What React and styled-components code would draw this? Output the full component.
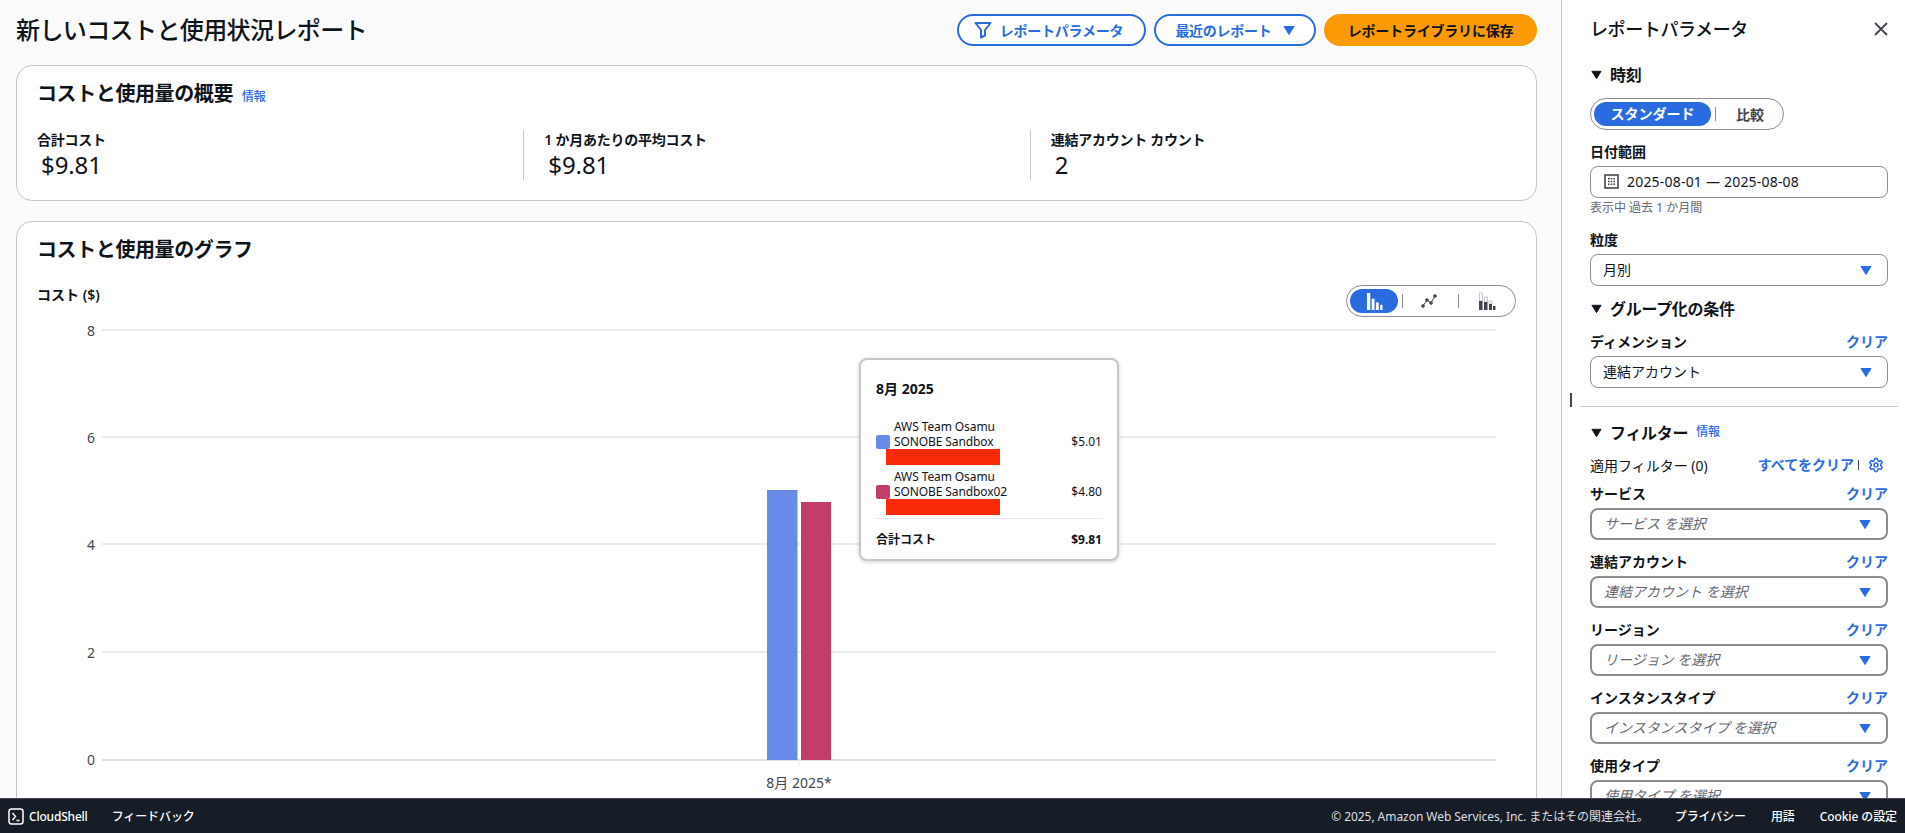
import React from "react";
import styled, { createGlobalStyle } from "styled-components";
import { Settings } from "lucide-react";

const blue = "#2a6ce0";
const ink = "#0f141a";

const GlobalStyle = createGlobalStyle`
    html, body {
        margin: 0;
        height: 100%;
        overflow: hidden;
    }
    body {
        background: #fbfbfb;
        color: ${ink};
        font-family: "Noto Sans", "Noto Sans CJK JP", sans-serif;
        font-size: 14px;
    }
    * {
        box-sizing: border-box;
    }
`;

const filters = [
    { label: "サービス", placeholder: "サービス を選択" },
    { label: "連結アカウント", placeholder: "連結アカウント を選択" },
    { label: "リージョン", placeholder: "リージョン を選択" },
    { label: "インスタンスタイプ", placeholder: "インスタンスタイプ を選択" },
    { label: "使用タイプ", placeholder: "使用タイプ を選択" },
];

const gridLines = [
    { value: 8, y: 330 },
    { value: 6, y: 437 },
    { value: 4, y: 544 },
    { value: 2, y: 652 },
];

const Caret = ({ size = 12, color = blue }) => (
    <svg width={size} height={size} viewBox="0 0 12 12">
        <path d="M1 2.5h10L6 10.5z" fill={color} stroke={color} strokeLinejoin="round" />
    </svg>
);

const FilterIcon = () => (
    <svg width="18" height="18" viewBox="0 0 18 18" fill="none" stroke={blue} strokeWidth="2" strokeLinejoin="round">
        <path d="M1.500 2h15l-5.500 7v5.500L7 16.500V9z" />
    </svg>
);

const CloseIcon = () => (
    <svg width="14" height="14" viewBox="0 0 14 14" fill="none" stroke="#424650" strokeWidth="1.8">
        <path d="M1 1l12 12M13 1L1 13" />
    </svg>
);

const CalendarIcon = () => (
    <svg width="15" height="15" viewBox="0 0 15 15" fill="none">
        <rect x="1" y="1" width="13" height="13" stroke="#424650" strokeWidth="1.6" />
        <path d="M4 4h1.6v1.6H4zM6.7 4h1.6v1.6H6.7zM9.4 4H11v1.6H9.4zM4 6.7h1.6v1.6H4zM6.7 6.7h1.6v1.6H6.7zM9.4 6.7H11v1.6H9.4zM4 9.4h1.6V11H4zM6.7 9.4h1.6V11H6.7zM9.4 9.4H11V11H9.4z" fill="#424650" />
    </svg>
);

const BarsIcon = () => (
    <svg width="17" height="17" viewBox="0 0 18 18" fill="#fff">
        <path d="M1 0h3.500v18H1zM6 6h3v12H6zM10.500 10h3v8h-3zM15 12.500h2.500V18H15z" />
    </svg>
);

const LineIcon = () => (
    <svg width="16" height="16" viewBox="0 0 16 16" fill="#424650" stroke="#424650">
        <path d="M2 13L6 7l4 3 4-7" fill="none" strokeWidth="1" />
        <circle cx="2" cy="13" r="1.300" />
        <circle cx="6" cy="7" r="1.300" />
        <circle cx="10" cy="10" r="1.300" />
        <circle cx="14" cy="3" r="1.300" />
    </svg>
);

const StackedIcon = () => (
    <svg width="18" height="18" viewBox="0 0 18 18">
        <path d="M1.500 1h3v8h-3zM6.500 5h3v5h-3zM11 9h3v3h-3z" fill="#fff" stroke="#c6c6cd" strokeWidth="1" />
        <path d="M1 9h3.500v9H1zM6 10h3.500v8H6zM11 12h3v6h-3zM15 14h2.500v4H15z" fill="#424650" />
    </svg>
);

const ShellIcon = () => (
    <svg width="16" height="17" viewBox="0 0 16 17" fill="none" stroke="#fff">
        <rect x="1" y="1" width="14" height="15" rx="2.500" strokeWidth="1.500" />
        <path d="M4.500 5l3 3.500-3 3.500M8.500 12.500h3" strokeWidth="1.400" />
    </svg>
);

const SelectBox = ({ value, strong, placeholder }) => (
    <Box $strong={strong}>
        {placeholder ? <Placeholder>{placeholder}</Placeholder> : <BoxText>{value}</BoxText>}
        <Caret />
    </Box>
);

function App() {
    return (
        <Page>
            <GlobalStyle />
            <Body>
                <Main>
                    <Header>
                        <Title>新しいコストと使用状況レポート</Title>
                        <Actions>
                            <OutlineButton $width={189} $gap={8} $padRight={6}>
                                <FilterIcon />
                                レポートパラメータ
                            </OutlineButton>
                            <OutlineButton $width={162} $gap={11}>
                                最近のレポート
                                <Caret />
                            </OutlineButton>
                            <PrimaryButton>レポートライブラリに保存</PrimaryButton>
                        </Actions>
                    </Header>

                    <Card>
                        <CardTitle>
                            コストと使用量の概要 <InfoLink>情報</InfoLink>
                        </CardTitle>
                        <Stats>
                            <Stat>
                                <StatLabel>合計コスト</StatLabel>
                                <StatValue>$9.81</StatValue>
                            </Stat>
                            <Stat $divided>
                                <StatLabel>1 か月あたりの平均コスト</StatLabel>
                                <StatValue>$9.81</StatValue>
                            </Stat>
                            <Stat $divided>
                                <StatLabel>連結アカウント カウント</StatLabel>
                                <StatValue>2</StatValue>
                            </Stat>
                        </Stats>
                    </Card>

                    <ChartCard>
                        <CardTitle>コストと使用量のグラフ</CardTitle>
                        <ChartHead>
                            <ChartAxisTitle>コスト ($)</ChartAxisTitle>
                            <ChartToggle>
                                <ChartOption $active>
                                    <BarsIcon />
                                </ChartOption>
                                <ToggleRule />
                                <ChartOption>
                                    <LineIcon />
                                </ChartOption>
                                <ToggleRule />
                                <ChartOption $shift={2}>
                                    <StackedIcon />
                                </ChartOption>
                            </ChartToggle>
                        </ChartHead>
                        <ChartArea>
                            <svg width="1519" height="480" viewBox="17 317 1519 480">
                                {gridLines.map((line) => (
                                    <g key={line.value}>
                                        <line x1="102" x2="1496" y1={line.y} y2={line.y} stroke="#e6e6ea" strokeWidth="1.5" />
                                        <AxisText x="95" y={line.y + 6} textAnchor="end">
                                            {line.value}
                                        </AxisText>
                                    </g>
                                ))}
                                <line x1="102" x2="1496" y1="760" y2="760" stroke="#dedee3" strokeWidth="2" />
                                <line x1="799" x2="799" y1="760" y2="766" stroke="#e8e8ec" strokeWidth="1" />
                                <AxisText x="95" y="765" textAnchor="end">0</AxisText>
                                <rect x="767" y="490" width="30.500" height="270" fill="#688ae8" />
                                <rect x="801" y="502" width="30" height="258" fill="#c33d69" />
                                <AxisText x="799" y="788" textAnchor="middle">8月 2025*</AxisText>
                            </svg>
                            <Tooltip>
                                <TooltipTitle>8月 2025</TooltipTitle>
                                <TooltipRow>
                                    <Swatch $color="#688ae8" />
                                    <TooltipName>AWS Team Osamu<br />SONOBE Sandbox</TooltipName>
                                    <TooltipAmount>$5.01</TooltipAmount>
                                </TooltipRow>
                                <Redaction />
                                <TooltipRow>
                                    <Swatch $color="#c33d69" />
                                    <TooltipName>AWS Team Osamu<br />SONOBE Sandbox02</TooltipName>
                                    <TooltipAmount>$4.80</TooltipAmount>
                                </TooltipRow>
                                <Redaction />
                                <TooltipTotal>
                                    <span>合計コスト</span>
                                    <span>$9.81</span>
                                </TooltipTotal>
                            </Tooltip>
                        </ChartArea>
                    </ChartCard>
                </Main>

                <Panel>
                    <PanelHead>
                        <PanelTitle>レポートパラメータ</PanelTitle>
                        <CloseIcon />
                    </PanelHead>

                    <SectionHead $top={20}>
                        <Caret size={11} color={ink} />
                        時刻
                    </SectionHead>
                    <Segment>
                        <SegmentOn>スタンダード</SegmentOn>
                        <SegmentRule />
                        <SegmentOff>比較</SegmentOff>
                    </Segment>

                    <FieldLabel $top={12}>日付範囲</FieldLabel>
                    <DateBox>
                        <CalendarIcon />
                        <DateText>2025-08-01 — 2025-08-08</DateText>
                    </DateBox>
                    <Hint>表示中 過去 1 か月間</Hint>

                    <FieldLabel $top={14}>粒度</FieldLabel>
                    <SelectBox value="月別" />

                    <SectionHead $top={10}>
                        <Caret size={11} color={ink} />
                        グループ化の条件
                    </SectionHead>
                    <LabelRow $top={12}>
                        <FieldLabel>ディメンション</FieldLabel>
                        <ClearLink>クリア</ClearLink>
                    </LabelRow>
                    <SelectBox value="連結アカウント" />

                    <PanelRule>
                        <DragHandle />
                    </PanelRule>

                    <SectionHead $top={13}>
                        <Caret size={11} color={ink} />
                        フィルター
                        <InfoLink>情報</InfoLink>
                    </SectionHead>
                    <AppliedRow>
                        <span>適用フィルター (0)</span>
                        <AppliedTools>
                            <ClearLink>すべてをクリア</ClearLink>
                            <ThinBar />
                            <Settings size={16} color={blue} strokeWidth={2.4} />
                        </AppliedTools>
                    </AppliedRow>
                    {filters.map((filter) => (
                        <FilterField key={filter.label}>
                            <LabelRow>
                                <FieldLabel>{filter.label}</FieldLabel>
                                <ClearLink>クリア</ClearLink>
                            </LabelRow>
                            <SelectBox strong placeholder={filter.placeholder} />
                        </FilterField>
                    ))}
                </Panel>
            </Body>

            <Footer>
                <FooterGroup $gap={24}>
                    <ShellLink>
                        <ShellIcon />
                        CloudShell
                    </ShellLink>
                    <FooterItem>フィードバック</FooterItem>
                </FooterGroup>
                <FooterGroup $gap={25}>
                    <Copyright>© 2025, Amazon Web Services, Inc. またはその関連会社。</Copyright>
                    <FooterItem>プライバシー</FooterItem>
                    <FooterItem>用語</FooterItem>
                    <FooterItem>Cookie の設定</FooterItem>
                </FooterGroup>
            </Footer>
        </Page>
    );
}

const Page = styled.div`
    display: flex;
    flex-direction: column;
    height: 100vh;
    overflow: hidden;
`;

const Body = styled.div`
    display: flex;
    flex: 1;
    min-height: 0;
`;

const Main = styled.main`
    flex: 1;
    min-width: 0;
    padding: 14px 24px 0 16px;
    overflow: hidden;
`;

const Header = styled.header`
    display: flex;
    align-items: center;
    justify-content: space-between;
    height: 32px;
    margin-bottom: 19px;
`;

const Title = styled.h1`
    margin: 0;
    font-size: 24px;
    line-height: 32px;
    font-weight: 500;
    letter-spacing: -0.6px;
`;

const Actions = styled.div`
    display: flex;
    gap: 8px;
`;

const OutlineButton = styled.button`
    display: flex;
    align-items: center;
    justify-content: center;
    gap: ${(p) => p.$gap}px;
    width: ${(p) => p.$width}px;
    height: 32px;
    padding: 0 ${(p) => p.$padRight ?? 0}px 0 0;
    background: #fff;
    border: 2px solid ${blue};
    border-radius: 20px;
    color: ${blue};
    font: inherit;
    font-size: 14px;
    font-weight: 700;
    letter-spacing: -0.25px;
`;

const PrimaryButton = styled.button`
    width: 213px;
    height: 32px;
    padding: 0;
    background: #fa9a05;
    border: none;
    border-radius: 20px;
    color: ${ink};
    font: inherit;
    font-size: 14px;
    font-weight: 700;
    letter-spacing: -0.2px;
`;

const Card = styled.section`
    height: 136px;
    padding-top: 14px;
    background: #fff;
    border: 1px solid #c6c6cd;
    border-radius: 16px;
`;

const ChartCard = styled(Card)`
    height: 620px;
    margin-top: 20px;
`;

const CardTitle = styled.h2`
    display: flex;
    align-items: baseline;
    gap: 9px;
    margin: 0;
    padding-left: 20px;
    font-size: 20px;
    line-height: 28px;
    font-weight: 600;
    letter-spacing: -0.4px;
`;

const InfoLink = styled.a`
    color: ${blue};
    font-size: 12px;
    line-height: 16px;
    font-weight: 500;
    letter-spacing: -0.3px;
`;

const Stats = styled.div`
    display: grid;
    grid-template-columns: repeat(3, 1fr);
    margin-top: 22px;
`;

const Stat = styled.div`
    height: 50px;
    padding-left: 20px;
    border-left: ${(p) => (p.$divided ? "1px solid #c6c6cd" : "none")};
`;

const StatLabel = styled.div`
    font-size: 14px;
    line-height: 20px;
    font-weight: 600;
    letter-spacing: -0.25px;
`;

const StatValue = styled.div`
    padding-left: 4px;
    font-size: 24px;
    line-height: 30px;
    letter-spacing: -0.1px;
`;

const ChartHead = styled.div`
    display: flex;
    align-items: flex-start;
    justify-content: space-between;
    height: 32px;
    margin-top: 21px;
    padding: 0 20px;
`;

const ChartAxisTitle = styled(StatLabel)`
    letter-spacing: 0;
`;

const ChartToggle = styled.div`
    display: flex;
    align-items: center;
    width: 170px;
    height: 32px;
    padding: 0 3px;
    background: #fff;
    border: 1px solid #8c8c94;
    border-radius: 16px;
`;

const ChartOption = styled.span`
    display: flex;
    align-items: center;
    justify-content: center;
    flex: ${(p) => (p.$active ? "0 0 48px" : "1")};
    height: 24px;
    padding-left: ${(p) => p.$shift ?? 0}px;
    background: ${(p) => (p.$active ? blue : "transparent")};
    border-radius: 12px;
`;

const ToggleRule = styled.span`
    flex: none;
    width: 1px;
    height: 14px;
    margin-left: 4px;
    background: #8c8c94;
`;

const ChartArea = styled.div`
    position: relative;

    svg {
        display: block;
    }
`;

const AxisText = styled.text`
    font-size: 14px;
    fill: #424650;
`;

const Tooltip = styled.div`
    position: absolute;
    left: 842px;
    top: 41px;
    width: 260px;
    height: 203px;
    padding: 19px 15px 0;
    background: #fff;
    border: 2px solid #c6c6cd;
    border-radius: 8px;
    box-shadow: 0 1px 4px rgba(15, 20, 26, 0.2);
`;

const TooltipTitle = styled.div`
    margin-bottom: 20px;
    font-size: 14px;
    line-height: 20px;
    font-weight: 700;
`;

const TooltipRow = styled.div`
    display: flex;
    align-items: flex-end;
    height: 30px;
    font-size: 12px;
    line-height: 15px;
`;

const Swatch = styled.span`
    flex: none;
    width: 14px;
    height: 14px;
    background: ${(p) => p.$color};
    border-radius: 2px;
`;

const TooltipName = styled.span`
    margin-left: 4px;
    white-space: nowrap;
    letter-spacing: -0.1px;
`;

const TooltipAmount = styled.span`
    margin-left: auto;
`;

const Redaction = styled.div`
    width: 114px;
    height: 16px;
    margin: 0 0 4px 10px;
    background: #f92a07;
`;

const TooltipTotal = styled.div`
    display: flex;
    justify-content: space-between;
    margin-top: -1px;
    padding-top: 11px;
    border-top: 1px solid #e8e8ec;
    font-size: 12px;
    line-height: 20px;
    font-weight: 700;
`;

const Panel = styled.aside`
    flex: none;
    width: 344px;
    padding: 16px 17px 0 28px;
    background: #fff;
    border-left: 1px solid #c6c6cd;
    overflow: hidden;
`;

const PanelHead = styled.div`
    display: flex;
    align-items: center;
    justify-content: space-between;
    height: 26px;
`;

const PanelTitle = styled.h2`
    margin: 0;
    font-size: 18px;
    line-height: 26px;
    font-weight: 500;
    letter-spacing: -0.4px;
`;

const SectionHead = styled.h3`
    display: flex;
    align-items: center;
    gap: 8px;
    height: 24px;
    margin: ${(p) => p.$top ?? 21}px 0 0;
    padding-left: 1px;
    font-size: 16px;
    font-weight: 700;
    letter-spacing: -0.3px;
`;

const Segment = styled.div`
    display: flex;
    align-items: center;
    width: 194px;
    height: 32px;
    margin-top: 12px;
    padding: 0 3px;
    border: 1px solid #8c8c94;
    border-radius: 16px;
`;

const SegmentOn = styled.span`
    width: 117px;
    height: 24px;
    background: ${blue};
    border-radius: 12px;
    color: #fff;
    font-size: 14px;
    font-weight: 700;
    line-height: 24px;
    text-align: center;
`;

const SegmentRule = styled.span`
    width: 1px;
    height: 14px;
    margin-left: 4px;
    background: #8c8c94;
`;

const SegmentOff = styled.span`
    flex: 1;
    padding-left: 4px;
    color: #424650;
    font-weight: 700;
    text-align: center;
`;

const FieldLabel = styled.div`
    margin-top: ${(p) => p.$top ?? 0}px;
    font-size: 14px;
    line-height: 20px;
    font-weight: 600;
`;

const LabelRow = styled.div`
    display: flex;
    justify-content: space-between;
    margin-top: ${(p) => p.$top ?? 0}px;
`;

const ClearLink = styled.a`
    color: ${blue};
    font-size: 14px;
    line-height: 20px;
    font-weight: 600;
`;

const Box = styled.div`
    display: flex;
    align-items: center;
    justify-content: space-between;
    height: 32px;
    margin-top: 4px;
    padding: 0 15px 2px 12px;
    background: #fff;
    border: ${(p) => (p.$strong ? 2 : 1)}px solid #8c8c94;
    border-radius: 8px;

    svg {
        margin-top: 2px;
    }
`;

const DateBox = styled(Box)`
    justify-content: flex-start;
    gap: 8px;
    padding-left: 13px;

    svg {
        margin-top: 0;
    }
`;

const BoxText = styled.span`
    font-size: 14px;
`;

const DateText = styled(BoxText)`
    letter-spacing: 0.2px;
`;

const Placeholder = styled.span`
    color: #656871;
    font-size: 14px;
    font-style: italic;
`;

const Hint = styled.div`
    margin-top: 2px;
    color: #656871;
    font-size: 12px;
    line-height: 16px;
`;

const PanelRule = styled.div`
    position: relative;
    height: 1px;
    margin: 18px -10px 0;
    background: #c6c6cd;
`;

const DragHandle = styled.span`
    position: absolute;
    left: -10px;
    bottom: 0;
    width: 2px;
    height: 14px;
    background: #424650;
`;

const AppliedRow = styled.div`
    display: flex;
    align-items: center;
    justify-content: space-between;
    height: 20px;
    margin-top: 11px;
    padding-right: 4px;
`;

const AppliedTools = styled.div`
    display: flex;
    align-items: center;
    gap: 4px;
`;

const ThinBar = styled.span`
    width: 1px;
    height: 10px;
    margin-right: 5px;
    background: #424650;
`;

const FilterField = styled.div`
    margin-top: 9px;

    & + & {
        margin-top: 12px;
    }
`;

const Footer = styled.footer`
    display: flex;
    flex: none;
    align-items: center;
    justify-content: space-between;
    height: 35px;
    padding: 0 8px;
    background: #161d26;
    border-top: 1px solid #424650;
    color: #fff;
    font-size: 12px;
`;

const FooterGroup = styled.div`
    display: flex;
    align-items: center;
    gap: ${(p) => p.$gap}px;
`;

const FooterItem = styled.span`
    font-weight: 500;
    letter-spacing: -0.1px;
`;

const ShellLink = styled(FooterItem)`
    display: flex;
    align-items: center;
    gap: 5px;
    letter-spacing: -0.2px;
`;

const Copyright = styled.span`
    margin-right: 1px;
    color: #dedee3;
    letter-spacing: -0.05px;
`;

export default App;
